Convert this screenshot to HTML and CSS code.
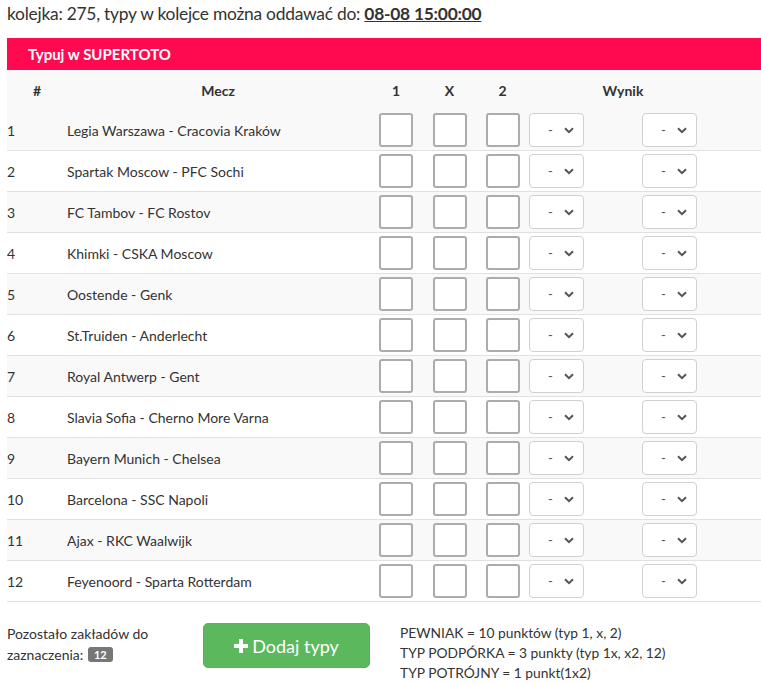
FILE: index.html
```html
<!DOCTYPE html>
<html lang="pl">
<head>
<meta charset="utf-8">
<title>SUPERTOTO</title>
<link rel="stylesheet" href="styles.css">
</head>
<body>
<div class="page">
  <div class="round">kolejka: 275, typy w kolejce można oddawać do: <span class="deadline">08-08 15:00:00</span></div>
  <div class="panel-title">Typuj w SUPERTOTO</div>
  <div class="grid">
    <div class="row head">
      <div class="c-num">#</div>
      <div class="c-match">Mecz</div>
      <div class="c-box">1</div>
      <div class="c-box">X</div>
      <div class="c-box">2</div>
      <div class="c-wynik">Wynik</div>
    </div>
    <div class="row"><div class="c-num">1</div><div class="c-match">Legia Warszawa - Cracovia Kraków</div><div class="c-box"><span class="chk"></span></div><div class="c-box"><span class="chk"></span></div><div class="c-box"><span class="chk"></span></div><div class="c-sa"><span class="sel"><span>-</span><svg viewBox="0 0 10 7" width="10" height="7"><path d="M1 1.2 L5 5.2 L9 1.2" fill="none" stroke="#555" stroke-width="2"/></svg></span></div><div class="c-sb"><span class="sel"><span>-</span><svg viewBox="0 0 10 7" width="10" height="7"><path d="M1 1.2 L5 5.2 L9 1.2" fill="none" stroke="#555" stroke-width="2"/></svg></span></div></div>
    <div class="row"><div class="c-num">2</div><div class="c-match">Spartak Moscow - PFC Sochi</div><div class="c-box"><span class="chk"></span></div><div class="c-box"><span class="chk"></span></div><div class="c-box"><span class="chk"></span></div><div class="c-sa"><span class="sel"><span>-</span><svg viewBox="0 0 10 7" width="10" height="7"><path d="M1 1.2 L5 5.2 L9 1.2" fill="none" stroke="#555" stroke-width="2"/></svg></span></div><div class="c-sb"><span class="sel"><span>-</span><svg viewBox="0 0 10 7" width="10" height="7"><path d="M1 1.2 L5 5.2 L9 1.2" fill="none" stroke="#555" stroke-width="2"/></svg></span></div></div>
    <div class="row"><div class="c-num">3</div><div class="c-match">FC Tambov - FC Rostov</div><div class="c-box"><span class="chk"></span></div><div class="c-box"><span class="chk"></span></div><div class="c-box"><span class="chk"></span></div><div class="c-sa"><span class="sel"><span>-</span><svg viewBox="0 0 10 7" width="10" height="7"><path d="M1 1.2 L5 5.2 L9 1.2" fill="none" stroke="#555" stroke-width="2"/></svg></span></div><div class="c-sb"><span class="sel"><span>-</span><svg viewBox="0 0 10 7" width="10" height="7"><path d="M1 1.2 L5 5.2 L9 1.2" fill="none" stroke="#555" stroke-width="2"/></svg></span></div></div>
    <div class="row"><div class="c-num">4</div><div class="c-match">Khimki - CSKA Moscow</div><div class="c-box"><span class="chk"></span></div><div class="c-box"><span class="chk"></span></div><div class="c-box"><span class="chk"></span></div><div class="c-sa"><span class="sel"><span>-</span><svg viewBox="0 0 10 7" width="10" height="7"><path d="M1 1.2 L5 5.2 L9 1.2" fill="none" stroke="#555" stroke-width="2"/></svg></span></div><div class="c-sb"><span class="sel"><span>-</span><svg viewBox="0 0 10 7" width="10" height="7"><path d="M1 1.2 L5 5.2 L9 1.2" fill="none" stroke="#555" stroke-width="2"/></svg></span></div></div>
    <div class="row"><div class="c-num">5</div><div class="c-match">Oostende - Genk</div><div class="c-box"><span class="chk"></span></div><div class="c-box"><span class="chk"></span></div><div class="c-box"><span class="chk"></span></div><div class="c-sa"><span class="sel"><span>-</span><svg viewBox="0 0 10 7" width="10" height="7"><path d="M1 1.2 L5 5.2 L9 1.2" fill="none" stroke="#555" stroke-width="2"/></svg></span></div><div class="c-sb"><span class="sel"><span>-</span><svg viewBox="0 0 10 7" width="10" height="7"><path d="M1 1.2 L5 5.2 L9 1.2" fill="none" stroke="#555" stroke-width="2"/></svg></span></div></div>
    <div class="row"><div class="c-num">6</div><div class="c-match">St.Truiden - Anderlecht</div><div class="c-box"><span class="chk"></span></div><div class="c-box"><span class="chk"></span></div><div class="c-box"><span class="chk"></span></div><div class="c-sa"><span class="sel"><span>-</span><svg viewBox="0 0 10 7" width="10" height="7"><path d="M1 1.2 L5 5.2 L9 1.2" fill="none" stroke="#555" stroke-width="2"/></svg></span></div><div class="c-sb"><span class="sel"><span>-</span><svg viewBox="0 0 10 7" width="10" height="7"><path d="M1 1.2 L5 5.2 L9 1.2" fill="none" stroke="#555" stroke-width="2"/></svg></span></div></div>
    <div class="row"><div class="c-num">7</div><div class="c-match">Royal Antwerp - Gent</div><div class="c-box"><span class="chk"></span></div><div class="c-box"><span class="chk"></span></div><div class="c-box"><span class="chk"></span></div><div class="c-sa"><span class="sel"><span>-</span><svg viewBox="0 0 10 7" width="10" height="7"><path d="M1 1.2 L5 5.2 L9 1.2" fill="none" stroke="#555" stroke-width="2"/></svg></span></div><div class="c-sb"><span class="sel"><span>-</span><svg viewBox="0 0 10 7" width="10" height="7"><path d="M1 1.2 L5 5.2 L9 1.2" fill="none" stroke="#555" stroke-width="2"/></svg></span></div></div>
    <div class="row"><div class="c-num">8</div><div class="c-match">Slavia Sofia - Cherno More Varna</div><div class="c-box"><span class="chk"></span></div><div class="c-box"><span class="chk"></span></div><div class="c-box"><span class="chk"></span></div><div class="c-sa"><span class="sel"><span>-</span><svg viewBox="0 0 10 7" width="10" height="7"><path d="M1 1.2 L5 5.2 L9 1.2" fill="none" stroke="#555" stroke-width="2"/></svg></span></div><div class="c-sb"><span class="sel"><span>-</span><svg viewBox="0 0 10 7" width="10" height="7"><path d="M1 1.2 L5 5.2 L9 1.2" fill="none" stroke="#555" stroke-width="2"/></svg></span></div></div>
    <div class="row"><div class="c-num">9</div><div class="c-match">Bayern Munich - Chelsea</div><div class="c-box"><span class="chk"></span></div><div class="c-box"><span class="chk"></span></div><div class="c-box"><span class="chk"></span></div><div class="c-sa"><span class="sel"><span>-</span><svg viewBox="0 0 10 7" width="10" height="7"><path d="M1 1.2 L5 5.2 L9 1.2" fill="none" stroke="#555" stroke-width="2"/></svg></span></div><div class="c-sb"><span class="sel"><span>-</span><svg viewBox="0 0 10 7" width="10" height="7"><path d="M1 1.2 L5 5.2 L9 1.2" fill="none" stroke="#555" stroke-width="2"/></svg></span></div></div>
    <div class="row"><div class="c-num">10</div><div class="c-match">Barcelona - SSC Napoli</div><div class="c-box"><span class="chk"></span></div><div class="c-box"><span class="chk"></span></div><div class="c-box"><span class="chk"></span></div><div class="c-sa"><span class="sel"><span>-</span><svg viewBox="0 0 10 7" width="10" height="7"><path d="M1 1.2 L5 5.2 L9 1.2" fill="none" stroke="#555" stroke-width="2"/></svg></span></div><div class="c-sb"><span class="sel"><span>-</span><svg viewBox="0 0 10 7" width="10" height="7"><path d="M1 1.2 L5 5.2 L9 1.2" fill="none" stroke="#555" stroke-width="2"/></svg></span></div></div>
    <div class="row"><div class="c-num">11</div><div class="c-match">Ajax - RKC Waalwijk</div><div class="c-box"><span class="chk"></span></div><div class="c-box"><span class="chk"></span></div><div class="c-box"><span class="chk"></span></div><div class="c-sa"><span class="sel"><span>-</span><svg viewBox="0 0 10 7" width="10" height="7"><path d="M1 1.2 L5 5.2 L9 1.2" fill="none" stroke="#555" stroke-width="2"/></svg></span></div><div class="c-sb"><span class="sel"><span>-</span><svg viewBox="0 0 10 7" width="10" height="7"><path d="M1 1.2 L5 5.2 L9 1.2" fill="none" stroke="#555" stroke-width="2"/></svg></span></div></div>
    <div class="row"><div class="c-num">12</div><div class="c-match">Feyenoord - Sparta Rotterdam</div><div class="c-box"><span class="chk"></span></div><div class="c-box"><span class="chk"></span></div><div class="c-box"><span class="chk"></span></div><div class="c-sa"><span class="sel"><span>-</span><svg viewBox="0 0 10 7" width="10" height="7"><path d="M1 1.2 L5 5.2 L9 1.2" fill="none" stroke="#555" stroke-width="2"/></svg></span></div><div class="c-sb"><span class="sel"><span>-</span><svg viewBox="0 0 10 7" width="10" height="7"><path d="M1 1.2 L5 5.2 L9 1.2" fill="none" stroke="#555" stroke-width="2"/></svg></span></div></div>
  </div>
  <div class="footer">
    <div class="remaining">Pozostało zakładów do zaznaczenia: <span class="badge">12</span></div>
    <button class="btn-add" type="button"><svg class="plus" viewBox="0 0 14 14" width="14" height="14"><path d="M5 0h4v5h5v4H9v5H5V9H0V5h5z" fill="#fff"/></svg>Dodaj typy</button>
    <div class="rules">
      <div>PEWNIAK = 10 punktów (typ 1, x, 2)</div>
      <div>TYP PODPÓRKA = 3 punkty (typ 1x, x2, 12)</div>
      <div>TYP POTRÓJNY = 1 punkt(1x2)</div>
    </div>
  </div>
</div>
</body>
</html>
```

FILE: styles.css
```css
* { box-sizing: border-box; }
html, body { margin: 0; padding: 0; background: #fff; }
body {
  font-family: Lato, "Open Sans", Arial, sans-serif;
  font-size: 14px;
  color: #333;
  overflow: hidden;
}
.page { padding-left: 7px; width: 761px; }
.round {
  font-size: 17.4px;
  letter-spacing: -0.25px;
  line-height: 28px;
  height: 28px;
  margin-bottom: 10px;
  white-space: nowrap;
}
.deadline { font-weight: 700; text-decoration: underline; }
.panel-title {
  background: #ff0a50;
  color: #fff;
  font-weight: 700;
  font-size: 15px;
  height: 32px;
  line-height: 32px;
  padding-left: 21px;
}
.row {
  display: grid;
  grid-template-columns: 60px 302px 54px 53px 53px 113px 1fr;
  height: 41px;
  border-bottom: 1px solid #e1e1e1;
  align-items: center;
}
.row:nth-child(even) { background: #f9f9f9; }
.row.head {
  height: 40px;
  border-bottom: none;
  background: #f9f9f9;
  font-weight: 700;
}
.row.head .c-num, .row.head .c-match { text-align: center; }
.c-box { display: flex; justify-content: center; align-items: center; }
.c-wynik { grid-column: 6 / 8; text-align: center; padding-right: 44px; }
.chk {
  display: block;
  width: 34px;
  height: 34px;
  border: 2px solid #acacac;
  border-radius: 3px;
  background: #fff;
}
.sel {
  display: flex;
  align-items: center;
  justify-content: space-between;
  width: 55px;
  height: 34px;
  border: 1px solid #d0d0d0;
  border-radius: 4px;
  background: #fff;
  padding: 0 9px 0 18px;
  color: #555;
  font-size: 13px;
}
.sel svg { display: block; }
.footer {
  display: flex;
  align-items: flex-start;
  padding-top: 21px;
}
.remaining {
  width: 165px;
  line-height: 21px;
  margin-right: 31px;
}
.badge {
  display: inline-block;
  background: #777;
  color: #fff;
  font-size: 11px;
  font-weight: 700;
  line-height: 15px;
  padding: 0 6px;
  border-radius: 3px;
  vertical-align: 1px;
  margin-left: 1px;
}
.btn-add {
  width: 167px;
  height: 45px;
  background: #5cb85c;
  border: 1px solid #57b257;
  border-radius: 5px;
  color: #fff;
  font-family: Lato, "Open Sans", Arial, sans-serif;
  font-size: 18px;
  display: flex;
  align-items: center;
  justify-content: center;
  gap: 4px;
  padding: 0;
  margin-right: 30px;
}
.plus { display: block; }
.rules { line-height: 20px; font-size: 13.8px; }
```
